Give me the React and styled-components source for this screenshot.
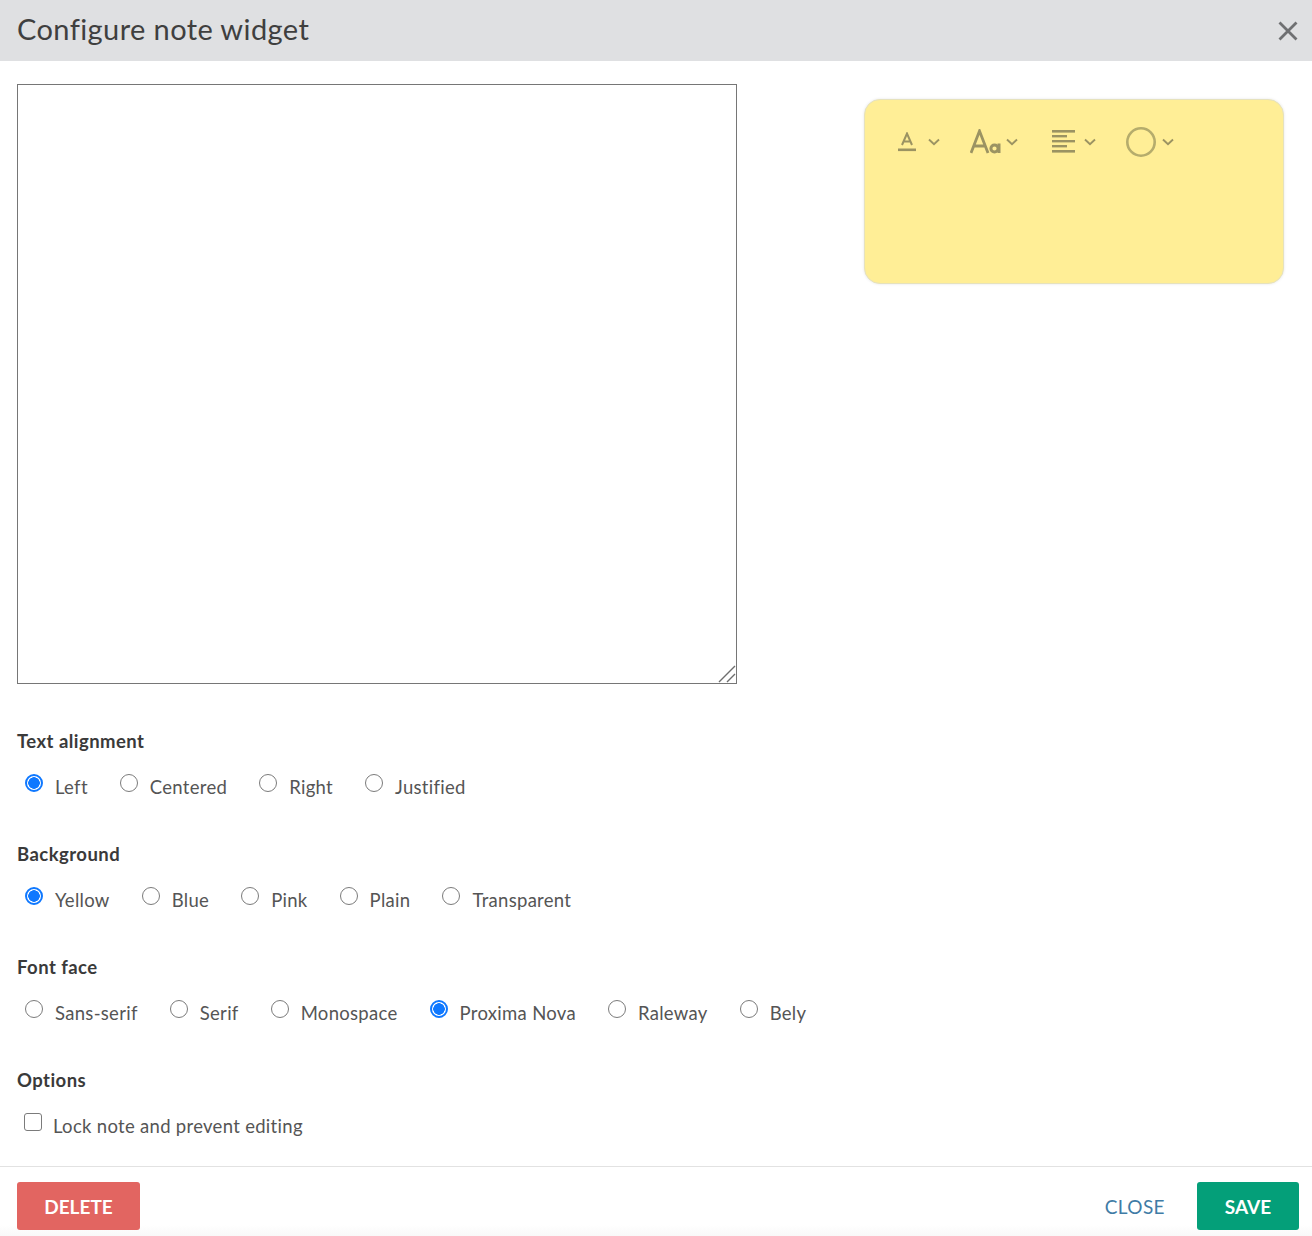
import React from "react";
import styled, { createGlobalStyle } from "styled-components";

const Global = createGlobalStyle`
  html, body { margin: 0; padding: 0; background: #fff; }
  body { font-family: "Lato", "Liberation Sans", sans-serif; color: #4a4a4a; }
  * { box-sizing: border-box; }
`;

const Dialog = styled.div`
  width: 1312px;
  height: 1236px;
  display: flex;
  flex-direction: column;
  background: #fff;
`;
const Header = styled.header`
  height: 61px;
  flex: none;
  background: #dfe0e2;
  display: flex;
  align-items: center;
  justify-content: space-between;
  padding: 0 14px 0 17px;
`;
const Title = styled.h1`
  margin: -4px 0 0;
  font-size: 29px;
  font-weight: 400;
  color: #3f3f3f;
  letter-spacing: 0.4px;
`;
const CloseX = styled.button`
  border: 0;
  background: none;
  padding: 0;
  width: 20px;
  height: 20px;
  color: #6f7072;
  display: flex;
`;
const Body = styled.main`
  flex: 1;
  padding: 23px 28px 0 17px;
`;
const Top = styled.div`
  display: flex;
  justify-content: space-between;
  align-items: flex-start;
`;
const EditorWrap = styled.div`
  position: relative;
  width: 720px;
  height: 600px;
`;
const Editor = styled.textarea`
  display: block;
  width: 100%;
  height: 100%;
  margin: 0;
  padding: 2px;
  border: 1px solid #767676;
  background: #fff;
  resize: none;
  outline: none;
`;
const Grip = styled.svg`
  position: absolute;
  right: 1px;
  bottom: 1px;
  width: 18px;
  height: 18px;
  pointer-events: none;
`;
const Note = styled.div`
  width: 420px;
  height: 185px;
  margin-top: 15px;
  background: #ffee96;
  border: 1px solid #e6e2bd;
  border-radius: 16px;
  display: flex;
  align-items: flex-start;
  padding: 27px 0 0 33px;
  box-shadow: 0 0 3px rgba(0, 0, 0, 0.1);
`;
const ToolBtn = styled.div`
  display: flex;
  align-items: center;
  height: 30px;
  width: ${(p) => p.$w}px;
  flex: none;
`;
const Sections = styled.div`
  padding-top: 46px;
`;
const Section = styled.section`
  height: 113px;
  &:last-child {
    height: 97px;
  }
`;
const SectionLabel = styled.div`
  font-size: 18.5px;
  line-height: 22px;
  font-weight: 700;
  color: #3a3a3a;
  margin-bottom: 22px;
  letter-spacing: 0.45px;
`;
const Options = styled.div`
  display: flex;
  padding-left: 8px;
  gap: 32px;
`;
const Choice = styled.label`
  display: flex;
  align-items: flex-start;
  gap: ${(p) => p.$gap || 12}px;
  font-size: 18.5px;
  color: #555;
  height: 24px;
`;
const RadioInput = styled.input.attrs({ type: "radio" })`
  appearance: none;
  width: 18px;
  height: 18px;
  margin: 0;
  flex: none;
  border-radius: 50%;
  border: 1.5px solid #7b7b7b;
  background: #fff;
  &:checked {
    border: 2px solid #0f78ff;
    background: radial-gradient(circle, #0f78ff 0 5.5px, #fff 6px);
  }
`;
const CheckInput = styled.input.attrs({ type: "checkbox" })`
  appearance: none;
  width: 18px;
  height: 18px;
  margin: 0;
  flex: none;
  border-radius: 3px;
  border: 1.5px solid #7b7b7b;
  background: #fff;
`;
const ChoiceText = styled.span`
  line-height: 24px;
  margin-top: -4px;
  padding-top: 5px;
  display: block;
  letter-spacing: 0.3px;
`;
const CheckRow = styled(Options)`
  padding-left: 7px;
`;
const Footer = styled.footer`
  height: 70px;
  flex: none;
  border-top: 1px solid #e2e2e2;
  display: flex;
  align-items: flex-start;
  justify-content: space-between;
  padding: 15px 13px 0 17px;
  background: linear-gradient(to bottom, #fff 0, #fff 58px, #f8f8f8 70px);
`;
const Actions = styled.div`
  display: flex;
  align-items: center;
  gap: 32px;
`;
const Button = styled.button`
  height: 48px;
  width: ${(p) => p.$w}px;
  border: 0;
  border-radius: 3px;
  background: ${(p) => p.$bg};
  color: #fff;
  font-family: inherit;
  font-size: 19px;
  font-weight: 700;
  padding: 0;
`;
const LinkButton = styled.button`
  border: 0;
  background: none;
  padding: 0;
  font-family: inherit;
  font-size: 19px;
  letter-spacing: 0.4px;
  color: #3f7ca6;
`;

const Chevron = ({ x = 0 }) => (
  <svg width="12" height="8" viewBox="0 0 12 8" style={{ marginLeft: x }}>
    <path d="M1 1.5 L6 6.2 L11 1.5" fill="none" stroke="#9b9362" strokeWidth="1.9" />
  </svg>
);

const ColorIcon = () => (
  <svg width="18" height="20" viewBox="0 0 18 20">
    <path d="M4 13 L9 1.5 L14 13 M5.8 9.5 H12.2" fill="none" stroke="#9b9362" strokeWidth="2" />
    <rect x="0" y="16.5" width="18" height="2.6" fill="#9b9362" />
  </svg>
);
const SizeIcon = () => (
  <svg width="32" height="26" viewBox="0 0 32 26">
    <path d="M1 24 L9.5 2 L18 24 M4 17 H15" fill="none" stroke="#9b9362" strokeWidth="2.8" />
    <circle cx="24.5" cy="19.5" r="3.6" fill="none" stroke="#9b9362" strokeWidth="3" />
    <path d="M29 14.5 V24" stroke="#9b9362" strokeWidth="3" />
  </svg>
);
const AlignIcon = () => (
  <svg width="23" height="24" viewBox="0 0 23 24">
    <g fill="#9b9362">
      <rect x="0" y="0" width="23" height="2.6" />
      <rect x="0" y="5" width="15" height="2.4" />
      <rect x="0" y="10" width="23" height="2.4" />
      <rect x="0" y="15" width="15" height="2.4" />
      <rect x="0" y="20" width="23" height="2.6" />
    </g>
  </svg>
);
const CircleIcon = () => (
  <svg width="30" height="30" viewBox="0 0 30 30">
    <circle cx="15" cy="15" r="13.7" fill="none" stroke="#b5ac6c" strokeWidth="2.6" />
  </svg>
);

const groups = [
  { title: "Text alignment", options: ["Left", "Centered", "Right", "Justified"], checked: "Left" },
  { title: "Background", options: ["Yellow", "Blue", "Pink", "Plain", "Transparent"], checked: "Yellow" },
  { title: "Font face", options: ["Sans-serif", "Serif", "Monospace", "Proxima Nova", "Raleway", "Bely"], checked: "Proxima Nova" },
];

export default function App() {
  return (
    <Dialog>
      <Global />
      <Header>
        <Title>Configure note widget</Title>
        <CloseX aria-label="Close">
          <svg width="20" height="20" viewBox="0 0 20 20">
            <path d="M1.5 1.5 L18.5 18.5 M18.5 1.5 L1.5 18.5" stroke="currentColor" strokeWidth="2.8" />
          </svg>
        </CloseX>
      </Header>
      <Body>
        <Top>
          <EditorWrap>
            <Editor />
            <Grip viewBox="0 0 18 18">
              <path d="M1 17 L17 1 M9 17 L17 9" stroke="#6e6e6e" strokeWidth="1.4" fill="none" />
            </Grip>
          </EditorWrap>
          <Note>
            <ToolBtn $w={72}>
              <ColorIcon />
              <Chevron x={12} />
            </ToolBtn>
            <ToolBtn $w={82}>
              <SizeIcon />
              <Chevron x={4} />
            </ToolBtn>
            <ToolBtn $w={74}>
              <AlignIcon />
              <Chevron x={9} />
            </ToolBtn>
            <ToolBtn $w={60}>
              <CircleIcon />
              <Chevron x={6} />
            </ToolBtn>
          </Note>
        </Top>
        <Sections>
          {groups.map((g) => (
            <Section key={g.title}>
              <SectionLabel>{g.title}</SectionLabel>
              <Options>
                {g.options.map((o) => (
                  <Choice key={o}>
                    <RadioInput name={g.title} defaultChecked={o === g.checked} />
                    <ChoiceText>{o}</ChoiceText>
                  </Choice>
                ))}
              </Options>
            </Section>
          ))}
          <Section>
            <SectionLabel>Options</SectionLabel>
            <CheckRow>
              <Choice $gap={11}>
                <CheckInput />
                <ChoiceText>Lock note and prevent editing</ChoiceText>
              </Choice>
            </CheckRow>
          </Section>
        </Sections>
      </Body>
      <Footer>
        <Button $w={123} $bg="#e26561">DELETE</Button>
        <Actions>
          <LinkButton>CLOSE</LinkButton>
          <Button $w={102} $bg="#049f79">SAVE</Button>
        </Actions>
      </Footer>
    </Dialog>
  );
}
